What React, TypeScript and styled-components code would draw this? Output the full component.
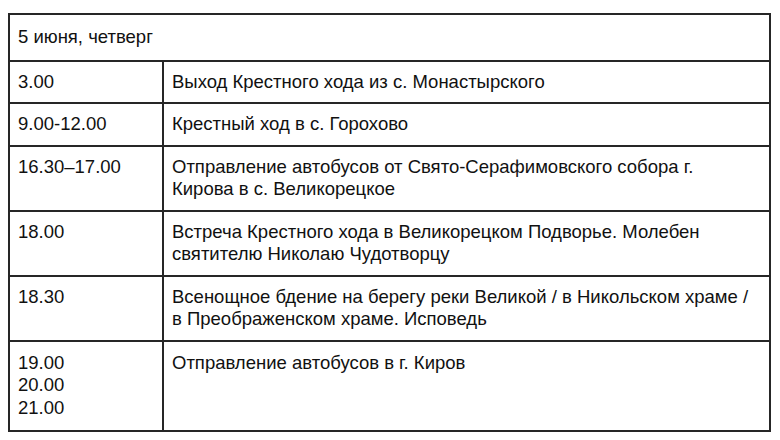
import React from "react";
import styled, { createGlobalStyle } from "styled-components";

const Global = createGlobalStyle`
  html, body { margin: 0; padding: 0; background: #ffffff; }
  body { font-family: "Liberation Sans", Arial, sans-serif; color: #111111; }
`;

const Page = styled.div`
  padding: 13px 0 0 8px;
`;

const Table = styled.table`
  border-collapse: collapse;
  width: 763px;
  font-size: 18.5px;
  line-height: 22.5px;
  border: 2px solid #262626;
`;

const Cell = styled.td<{ $wide?: boolean; $tall?: boolean }>`
  border: 2px solid #262626;
  padding: ${(p) => (p.$tall ? "10px 8px 11px 8px" : "9px 8px 9px 8px")};
  vertical-align: top;
  text-align: left;
  width: ${(p) => (p.$wide ? "auto" : "136px")};
`;

const HeadCell = styled.td`
  border: 2px solid #262626;
  padding: 11px 8px 11px 8px;
  vertical-align: top;
`;

type Row = { time: React.ReactNode; text: React.ReactNode; tall?: boolean };

const rows: Row[] = [
  { time: "3.00", text: "Выход Крестного хода из с. Монастырского" },
  { time: "9.00-12.00", text: "Крестный ход в с. Горохово" },
  {
    time: "16.30–17.00",
    text: (
      <>
        Отправление автобусов от Свято-Серафимовского собора г.
        <br />
        Кирова в с. Великорецкое
      </>
    ),
  },
  {
    time: "18.00",
    text: (
      <>
        Встреча Крестного хода в Великорецком Подворье. Молебен
        <br />
        святителю Николаю Чудотворцу
      </>
    ),
  },
  {
    time: "18.30",
    text: (
      <>
        Всенощное бдение на берегу реки Великой / в Никольском храме /
        <br />в Преображенском храме. Исповедь
      </>
    ),
  },
  {
    time: (
      <>
        19.00
        <br />
        20.00
        <br />
        21.00
      </>
    ),
    text: "Отправление автобусов в г. Киров",
    tall: true,
  },
];

export default function App() {
  return (
    <Page>
      <Global />
      <Table>
        <tbody>
          <tr>
            <HeadCell colSpan={2}>5 июня, четверг</HeadCell>
          </tr>
          {rows.map((r, i) => (
            <tr key={i}>
              <Cell $tall={r.tall}>{r.time}</Cell>
              <Cell $wide $tall={r.tall}>
                {r.text}
              </Cell>
            </tr>
          ))}
        </tbody>
      </Table>
    </Page>
  );
}
